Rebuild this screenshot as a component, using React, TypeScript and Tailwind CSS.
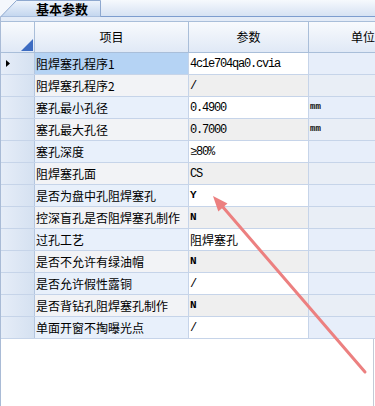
import React from 'react';

type Row = { name: string; val: string; unit?: string; kind?: 'mono' | 'yn' | 'cjk' };

const rows: Row[] = [
  { name: '阻焊塞孔程序1', val: '4c1e704qa0.cvia' },
  { name: '阻焊塞孔程序2', val: '/' },
  { name: '塞孔最小孔径', val: '0.4900', unit: 'mm' },
  { name: '塞孔最大孔径', val: '0.7000', unit: 'mm' },
  { name: '塞孔深度', val: '≥80%' },
  { name: '阻焊塞孔面', val: 'CS' },
  { name: '是否为盘中孔阻焊塞孔', val: 'Y', kind: 'yn' },
  { name: '控深盲孔是否阻焊塞孔制作', val: 'N', kind: 'yn' },
  { name: '过孔工艺', val: '阻焊塞孔', kind: 'cjk' },
  { name: '是否不允许有绿油帽', val: 'N', kind: 'yn' },
  { name: '是否允许假性露铜', val: '/' },
  { name: '是否背钻孔阻焊塞孔制作', val: 'N', kind: 'yn' },
  { name: '单面开窗不掏曝光点', val: '/' },
];

const cjk = '"Noto Sans CJK SC", "Noto Sans", sans-serif';
const mono = '"Liberation Mono", "Noto Sans CJK SC", monospace';

function ValueText({ r }: { r: Row }) {
  if (r.kind === 'cjk') {
    return <span className="text-[12px] text-black" style={{ fontFamily: cjk }}>{r.val}</span>;
  }
  if (r.kind === 'yn') {
    return (
      <span className="text-[11px] font-bold text-black" style={{ fontFamily: mono }}>
        {r.val}
      </span>
    );
  }
  return (
    <span className="text-[12px] tracking-[-1.2px] text-black" style={{ fontFamily: mono }}>
      {r.val}
    </span>
  );
}

export default function App() {
  return (
    <div className="relative w-[375px] h-[406px] overflow-hidden bg-white" style={{ fontFamily: cjk }}>
      {/* tab strip */}
      <div className="flex h-[17px]">
        <div className="relative w-[101px] h-[17px]">
          <svg className="absolute inset-0" width="101" height="17" viewBox="0 0 101 17">
            <defs>
              <linearGradient id="tabg" x1="0" y1="0" x2="0" y2="1">
                <stop offset="0" stopColor="#eef4fc" />
                <stop offset="1" stopColor="#c2d5ee" />
              </linearGradient>
            </defs>
            <rect x="0" y="0" width="101" height="17" fill="#f4f7fc" />
            <polygon points="0.5,17 16.5,0.5 100.5,0.5 100.5,17" fill="url(#tabg)" stroke="#8ea8cf" strokeWidth="1" />
          </svg>
          <div className="relative h-[16px] flex items-center pl-[36px] leading-none text-[13px] font-bold text-black">基本参数</div>
        </div>
        <div className="flex-1 h-[17px] border-b border-[#7d9dcf] bg-gradient-to-b from-[#f6f9fd] to-[#d6e2f3]" />
      </div>

      <div className="border-l border-[#a9bbd6] h-[389px] flex flex-col">
        <div className="h-[4px] bg-[#e3ebf7]" />
        {/* header */}
        <div className="flex h-[32px] border-y border-[#a9bed9] bg-gradient-to-b from-[#f8fafd] to-[#e0e9f6]">
          <div className="relative w-[34px] shrink-0 border-r border-[#a9bed9]">
            <svg className="absolute right-[1px] bottom-[1px]" width="12" height="12" viewBox="0 0 12 12">
              <polygon points="0,12 12,12 12,0" fill="#3d6cc2" />
            </svg>
          </div>
          <div className="w-[154px] shrink-0 border-r border-[#a9bed9] flex items-center justify-center text-[12px] text-black">项目</div>
          <div className="w-[120px] shrink-0 border-r border-[#a9bed9] flex items-center justify-center text-[12px] text-black">参数</div>
          <div className="w-[108px] shrink-0 flex items-center justify-center text-[12px] text-black">单位</div>
        </div>
        {/* rows */}
        {rows.map((r, i) => {
          const even = i % 2 === 1;
          const sel = i === 0;
          return (
            <div key={i} className="flex h-[22px] border-b border-[#c6d4e9]">
              <div className="relative w-[34px] shrink-0 border-r border-[#b4c6df] bg-gradient-to-r from-[#e6edf8] to-[#d5e1f1] flex items-center">
                {sel && (
                  <svg className="ml-[5px]" width="4" height="7" viewBox="0 0 4 7">
                    <polygon points="0,0 4,3.5 0,7" fill="#000" />
                  </svg>
                )}
              </div>
              <div
                className={`w-[154px] shrink-0 border-r border-[#c6d4e9] flex items-center pl-[1px] text-[12px] text-black whitespace-nowrap ${
                  sel ? 'bg-[#b5d3f4]' : even ? 'bg-[#f2f3f6]' : 'bg-[#e8f0fb]'
                }`}
              >
                {r.name}
              </div>
              <div
                className={`w-[120px] shrink-0 border-r border-[#c6d4e9] flex items-center pl-[1px] whitespace-nowrap ${
                  even ? 'bg-[#efefef]' : 'bg-white'
                }`}
              >
                <ValueText r={r} />
              </div>
              <div className={`w-[108px] shrink-0 flex items-center pl-[1px] ${even ? 'bg-[#e9eef6]' : 'bg-[#e7eefa]'}`}>
                {r.unit && (
                  <span className="text-[9px] font-bold text-[#111]" style={{ fontFamily: mono }}>
                    {r.unit}
                  </span>
                )}
              </div>
            </div>
          );
        })}
        <div className="flex-1 flex">
          <div className="flex-1" />
          <div className="w-[2px] border-l border-[#c3cad6]" />
        </div>
      </div>

      {/* red arrow annotation */}
      <svg className="absolute left-0 top-0 pointer-events-none" width="375" height="406" viewBox="0 0 375 406">
        <line x1="365" y1="372" x2="222" y2="206" stroke="#ec8080" strokeWidth="3" strokeLinecap="round" />
        <polygon points="213,196 227.5,203.5 218.3,211.5" fill="#ec8080" />
      </svg>
    </div>
  );
}
